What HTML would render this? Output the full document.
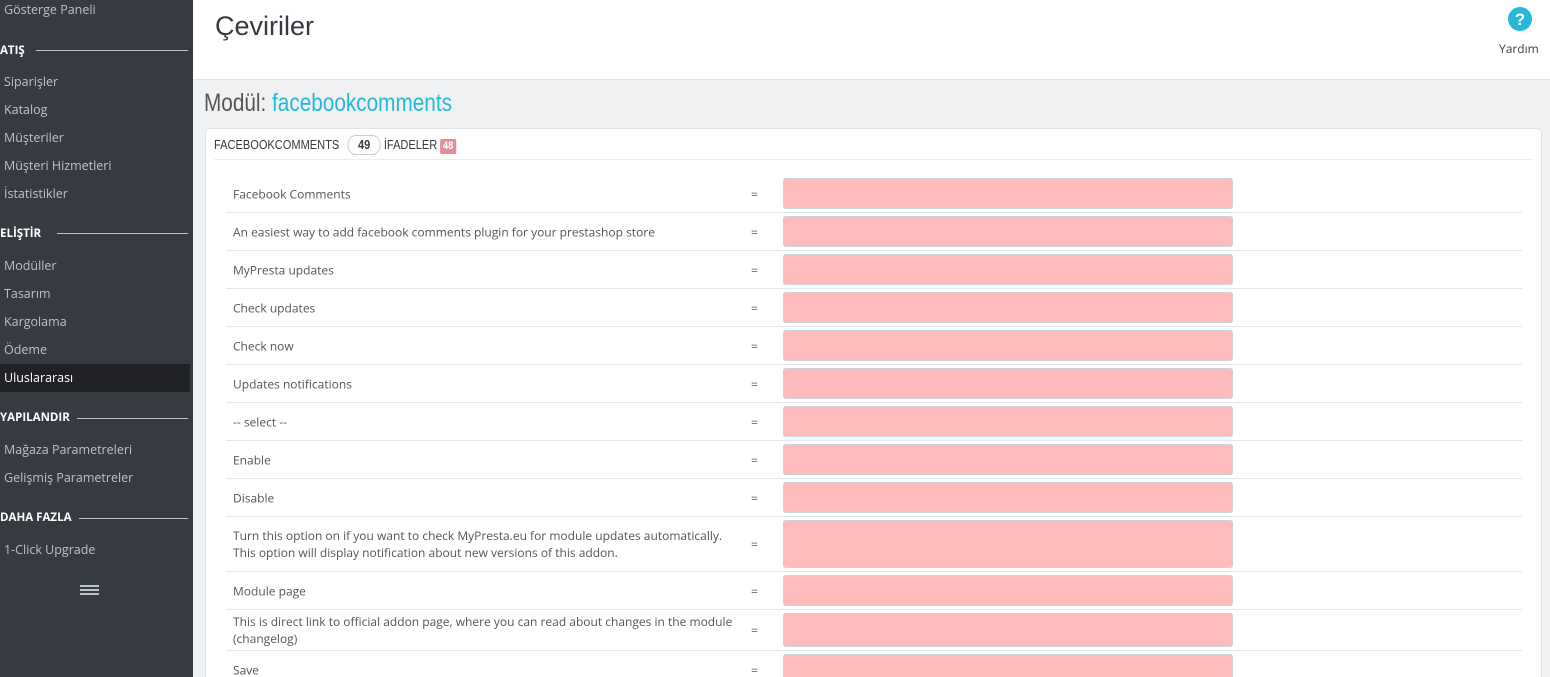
<!DOCTYPE html>
<html><head><meta charset="utf-8"><style>
*{box-sizing:border-box;margin:0;padding:0}
html,body{width:1550px;height:677px;overflow:hidden}
body{background:#eff1f2;font-family:"Open Sans","Liberation Sans",sans-serif;position:relative}
#sb{position:absolute;left:0;top:0;width:193px;height:677px;background:#363a41;color:#bcc2c9;font-size:12.5px}
.it{position:absolute;left:4px;height:28px;line-height:28px}
.act{position:absolute;left:0;top:364px;width:190px;height:28px;background:#202226;color:#fff;padding-left:4px;line-height:28px;font-size:12.5px}
.hd{position:absolute;left:0;font-weight:bold;color:#fff;font-size:11.5px;height:16px;line-height:16px}
.ln{position:absolute;right:5px;height:1px;background:#bcc2c9}
#top{position:absolute;left:193px;top:0;width:1357px;height:80px;background:#fff;border-bottom:1px solid #dfe2e6}
h1{position:absolute;left:22px;top:11px;font-weight:300;font-size:27px;color:#363a41;font-family:"Liberation Sans",sans-serif}
h2{position:absolute;left:204px;top:89px;font-size:25px;font-weight:normal;color:#555;font-family:"Liberation Sans",sans-serif;transform:scaleX(0.83);transform-origin:0 0;white-space:nowrap}
h2 span{color:#25b9d7}
#panel{position:absolute;left:205px;top:128px;width:1337px;height:560px;background:#fff;border:1px solid #dfe2e6;border-radius:5px}
#ph{position:absolute;left:8px;top:0;right:8px;height:31px;border-bottom:1px solid #eceeef}
#pht{position:absolute;left:0;top:0;font-family:"Liberation Sans",sans-serif;font-size:13px;color:#363a41;line-height:31px;transform:scaleX(0.85);transform-origin:0 0;white-space:nowrap}
.b1{display:inline-block;border:1px solid #ccc;border-radius:10px;padding:0 11px;line-height:18px;font-weight:bold;margin:0 4px 0 10px}
.b2{display:inline-block;background:#e08f95;color:#fff;border-radius:2px;padding:0 3px;font-size:11px;line-height:15px;font-weight:bold}
.r{position:absolute;left:20px;width:1296px;border-bottom:1px solid #e5e8eb;font-size:12px;color:#555}
.r .l{position:absolute;left:7px;top:50%;transform:translateY(-50%);line-height:17px;width:500px}
.r .e{position:absolute;left:525px;top:50%;transform:translateY(-50%);font-size:12px}
.r .i{position:absolute;left:557px;top:3px;bottom:3px;width:450px;background:#ffbbbc;border:1px solid #c9d3da;border-radius:3px}
</style></head><body>
<div id="sb">
<div class="it" style="top:-4px">Gösterge Paneli</div>
<div class="hd" style="top:43px">ATIŞ</div><div class="ln" style="left:36px;top:50px"></div>
<div class="it" style="top:68px">Siparişler</div>
<div class="it" style="top:96px">Katalog</div>
<div class="it" style="top:124px">Müşteriler</div>
<div class="it" style="top:152px">Müşteri Hizmetleri</div>
<div class="it" style="top:180px">İstatistikler</div>
<div class="hd" style="top:226px">ELİŞTİR</div><div class="ln" style="left:57px;top:233px"></div>
<div class="it" style="top:252px">Modüller</div>
<div class="it" style="top:280px">Tasarım</div>
<div class="it" style="top:308px">Kargolama</div>
<div class="it" style="top:336px">Ödeme</div>
<div class="act">Uluslararası</div>
<div class="hd" style="top:410px">YAPILANDIR</div><div class="ln" style="left:77px;top:418px"></div>
<div class="it" style="top:436px">Mağaza Parametreleri</div>
<div class="it" style="top:464px">Gelişmiş Parametreler</div>
<div class="hd" style="top:510px">DAHA FAZLA</div><div class="ln" style="left:79px;top:518px"></div>
<div class="it" style="top:536px">1-Click Upgrade</div>
<div style="position:absolute;left:80px;top:585px;width:19px;height:2px;background:#bcc2c9;box-shadow:0 4px #bcc2c9,0 8px #bcc2c9"></div>
</div>
<div id="top"><h1>Çeviriler</h1>
<svg style="position:absolute;left:1314px;top:6px" width="26" height="26" viewBox="0 0 26 26"><circle cx="13" cy="13" r="12" fill="#25b9d7"/><text x="13" y="19" text-anchor="middle" font-family="Liberation Sans" font-weight="bold" font-size="17" fill="#fff">?</text></svg>
<div style="position:absolute;left:1306px;top:40px;font-size:12px;color:#363a41">Yardım</div>
</div>
<h2>Modül: <span>facebookcomments</span></h2>
<div id="panel">
<div id="ph"><div id="pht">FACEBOOKCOMMENTS<span class="b1">49</span>İFADELER <span class="b2">48</span></div></div>
<div class="r" style="top:46px;height:38px"><div class="l">Facebook Comments</div><div class="e">=</div><div class="i"></div></div>
<div class="r" style="top:84px;height:38px"><div class="l">An easiest way to add facebook comments plugin for your prestashop store</div><div class="e">=</div><div class="i"></div></div>
<div class="r" style="top:122px;height:38px"><div class="l">MyPresta updates</div><div class="e">=</div><div class="i"></div></div>
<div class="r" style="top:160px;height:38px"><div class="l">Check updates</div><div class="e">=</div><div class="i"></div></div>
<div class="r" style="top:198px;height:38px"><div class="l">Check now</div><div class="e">=</div><div class="i"></div></div>
<div class="r" style="top:236px;height:38px"><div class="l">Updates notifications</div><div class="e">=</div><div class="i"></div></div>
<div class="r" style="top:274px;height:38px"><div class="l">-- select --</div><div class="e">=</div><div class="i"></div></div>
<div class="r" style="top:312px;height:38px"><div class="l">Enable</div><div class="e">=</div><div class="i"></div></div>
<div class="r" style="top:350px;height:38px"><div class="l">Disable</div><div class="e">=</div><div class="i"></div></div>
<div class="r" style="top:388px;height:55px"><div class="l">Turn this option on if you want to check MyPresta.eu for module updates automatically. This option will display notification about new versions of this addon.</div><div class="e">=</div><div class="i"></div></div>
<div class="r" style="top:443px;height:38px"><div class="l">Module page</div><div class="e">=</div><div class="i"></div></div>
<div class="r" style="top:481px;height:41px"><div class="l">This is direct link to official addon page, where you can read about changes in the module (changelog)</div><div class="e">=</div><div class="i"></div></div>
<div class="r" style="top:522px;height:38px"><div class="l">Save</div><div class="e">=</div><div class="i"></div></div>
</div>
</body></html>
